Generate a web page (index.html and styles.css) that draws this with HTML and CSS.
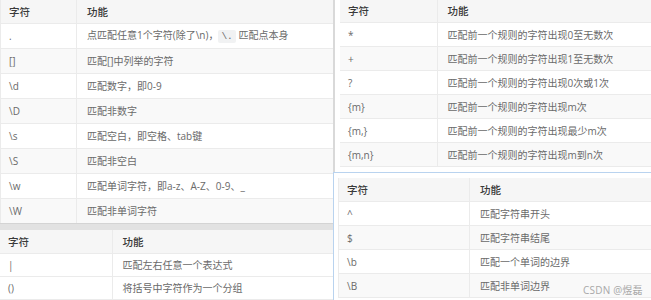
FILE: index.html
```html
<!DOCTYPE html>
<html lang="zh-CN">
<head>
<meta charset="utf-8">
<link rel="stylesheet" href="styles.css">
</head>
<body>
<div class="canvas">
  <div class="left">
    <table class="tbl t1">
      <colgroup><col class="c1"><col></colgroup>
      <thead><tr><th>字符</th><th>功能</th></tr></thead>
      <tbody>
        <tr><td>.</td><td>点匹配任意1个字符(除了\n)，<code>\.</code> 匹配点本身</td></tr>
        <tr><td>[]</td><td>匹配[]中列举的字符</td></tr>
        <tr><td>\d</td><td>匹配数字，即0-9</td></tr>
        <tr><td>\D</td><td>匹配非数字</td></tr>
        <tr><td>\s</td><td>匹配空白，即空格、tab键</td></tr>
        <tr><td>\S</td><td>匹配非空白</td></tr>
        <tr><td>\w</td><td>匹配单词字符，即a-z、A-Z、0-9、_</td></tr>
        <tr><td>\W</td><td>匹配非单词字符</td></tr>
      </tbody>
    </table>
    <div class="band"></div>
    <table class="tbl t2">
      <colgroup><col class="c1"><col></colgroup>
      <thead><tr><th>字符</th><th>功能</th></tr></thead>
      <tbody>
        <tr><td>|</td><td>匹配左右任意一个表达式</td></tr>
        <tr><td>()</td><td>将括号中字符作为一个分组</td></tr>
      </tbody>
    </table>
  </div>
  <div class="right">
    <div class="panel3">
      <table class="tbl t3">
        <colgroup><col class="c1"><col></colgroup>
        <thead><tr><th>字符</th><th>功能</th></tr></thead>
        <tbody>
          <tr><td>*</td><td>匹配前一个规则的字符出现0至无数次</td></tr>
          <tr><td>+</td><td>匹配前一个规则的字符出现1至无数次</td></tr>
          <tr><td>?</td><td>匹配前一个规则的字符出现0次或1次</td></tr>
          <tr><td>{m}</td><td>匹配前一个规则的字符出现m次</td></tr>
          <tr><td>{m,}</td><td>匹配前一个规则的字符出现最少m次</td></tr>
          <tr><td>{m,n}</td><td>匹配前一个规则的字符出现m到n次</td></tr>
        </tbody>
      </table>
    </div>
    <div class="panel4">
      <table class="tbl t4">
        <colgroup><col class="c1"><col></colgroup>
        <thead><tr><th>字符</th><th>功能</th></tr></thead>
        <tbody>
          <tr><td>^</td><td>匹配字符串开头</td></tr>
          <tr><td>$</td><td>匹配字符串结尾</td></tr>
          <tr><td>\b</td><td>匹配一个单词的边界</td></tr>
          <tr><td>\B</td><td>匹配非单词边界</td></tr>
        </tbody>
      </table>
      <span class="watermark">CSDN @煜磊</span>
    </div>
  </div>
</div>
</body>
</html>
```

FILE: styles.css
```css
html, body {
  margin: 0;
  padding: 0;
  background: #ffffff;
}
.canvas {
  width: 651px;
  height: 300px;
  overflow: hidden;
  display: grid;
  grid-template-columns: 333px 318px;
  font-family: "Open Sans", "Noto Sans CJK SC", sans-serif;
  font-size: 10px;
  color: #6a6a6a;
}
.left {
  overflow: hidden;
  background: #fff;
}
.right {
  overflow: hidden;
  display: flex;
  flex-direction: column;
}
.tbl {
  border-collapse: collapse;
  table-layout: fixed;
  width: 100%;
}
.tbl th, .tbl td {
  text-align: left;
  padding: 0 0 0 8px;
  border-bottom: 1px solid #ebebeb;
  white-space: nowrap;
  overflow: hidden;
  line-height: 14px;
}
.tbl th + th, .tbl td + td {
  border-left: 1px solid #ebebeb;
  padding-left: 10px;
}
.tbl th {
  background: #f6f6f6;
  color: #3a3a3a;
  font-weight: 500;
  font-size: 10.5px;
}
.tbl tbody tr:nth-child(even) td {
  background: #f9f9f9;
}
.t1 {
  border-left: 1px solid #ebebeb;
}
.t1 .c1 { width: 76px; }
.t1 th { height: 23px; }
.t1 td { height: 24px; }
code {
  font-family: "Liberation Mono", monospace;
  font-size: 9.5px;
  background: #f1f2f3;
  padding: 1px 3px;
  border-radius: 2px;
}
.band {
  height: 6px;
  background: #e2e2e2;
  border-top: 1px solid #d4d4d4;
  margin-top: -1px;
}
.t2 .c1 { width: 112px; }
.t2 th { height: 23px; }
.t2 td { height: 22px; }
.t2 tbody tr:nth-child(even) td { background: #fff; }
.t2 tbody tr:nth-child(odd) td { background: #fff; }
.panel3 {
  height: 172px;
  box-sizing: border-box;
  border-left: 2px solid #d9d9d9;
  padding-left: 5px;
  background: #fff;
  flex: none;
}
.t3 { width: 360px; }
.t3 .c1 { width: 97px; }
.t3 th { height: 22px; }
.t3 td { height: 23px; }
.panel4 {
  position: relative;
  flex: 1;
  border-top: 1px solid #b9d3ef;
  border-left: 1px solid #b9d3ef;
  padding: 5px 0 0 4px;
  background: #fff;
}
.t4 { width: 330px; border-left: 1px solid #ebebeb; }
.t4 .c1 { width: 131px; }
.t4 th { height: 23px; }
.t4 td { height: 23px; }
.watermark {
  position: absolute;
  left: 249px;
  top: 109px;
  font-size: 10px;
  color: #a8a8a8;
  letter-spacing: 0.2px;
}
```
